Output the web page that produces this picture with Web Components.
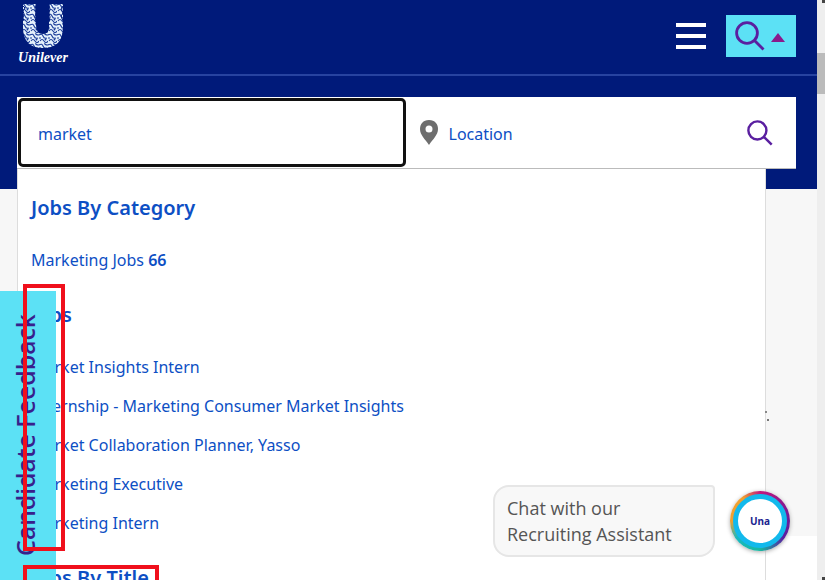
<!DOCTYPE html>
<html lang="en">
<head>
<meta charset="utf-8">
<title>Unilever careers</title>
<style>
html, body { height: 100%; }
body { margin: 0; overflow: hidden; background: #f7f7f7; color: #0d4fc4; font: 16px/24px "Noto Sans", sans-serif; }
</style>
</head>
<body>
<careers-page></careers-page>
<script>
function define(name, html) {
  const t = document.createElement('template');
  t.innerHTML = html;
  customElements.define(name, class extends HTMLElement {
    constructor() {
      super();
      this.attachShadow({ mode: 'open' }).appendChild(t.content.cloneNode(true));
    }
  });
}

define('search-glyph', `
<style>:host{display:block;width:30px;height:30px;color:#5a1fa0}svg{display:block;width:100%;height:100%}</style>
<svg viewBox="0 0 30 30" fill="none" stroke="currentColor" stroke-width="2.8" aria-hidden="true"><circle cx="12" cy="12" r="10.4"/><path d="M19.5 19.5 28.5 28.5"/></svg>`);

define('brand-logo', `
<style>
:host{display:block;width:54px}
a{display:block;color:#fff;text-decoration:none;text-align:center}
svg{display:block;margin:0 auto;width:44px;height:46px}
span{display:block;font:italic bold 14px/18px "Liberation Serif",serif}
</style>
<a href="#" aria-label="Unilever">
<svg viewBox="0 0 44 46" aria-hidden="true">
<defs><pattern id="lace" width="9" height="10" patternUnits="userSpaceOnUse">
<rect width="9" height="10" fill="#e4f0fb"/>
<path d="M0 2Q3 0 4 3T8 5M1 8Q3 5 5 8T9 8M6 0Q5 2 9 2M0 5h2" stroke="#183a98" stroke-width="1.1" fill="none"/>
<circle cx="6.5" cy="6.5" r=".9" fill="#183a98"/></pattern></defs>
<path d="M2 1H15V22Q15 31 22 31T28 22V1H42V24Q42 45 22 45T2 24Z" fill="url(#lace)"/>
<path d="M2 3l2 2-2 3 1 3-1 4 1 3M15 2l-1 4 1 4-1 4 1 5M28 2l1 4-1 4 1 4-1 5M42 3l-2 3 2 4-2 3 2 5" stroke="#001a7a" fill="none"/>
</svg><span>Unilever</span></a>`);

define('site-header', `
<style>
:host{display:flex;height:74px;box-sizing:content-box;border-bottom:2px solid #2743a0;padding:0 21px 0 16px;align-items:flex-start;justify-content:space-between}
nav{display:flex;gap:20px;padding-top:15px;align-items:center}
button{border:0;margin:0;background:none;cursor:pointer}
.menu{display:grid;gap:7px;width:30px;padding:0}
.menu i{height:4px;background:#fff}
.toggle{display:flex;align-items:center;gap:6px;height:42px;width:70px;padding:0 0 0 9px;background:#5ce1f5}
.toggle b{border:7px solid transparent;border-top:0;border-bottom:9px solid #8a1a8c;margin-top:2px}
brand-logo{padding-top:3px}
</style>
<brand-logo></brand-logo>
<nav><button class="menu" aria-label="Menu"><i></i><i></i><i></i></button>
<button class="toggle" aria-label="Toggle search"><search-glyph></search-glyph><b></b></button></nav>`);

define('job-search', `
<style>
:host{display:block;background:#fff;border-bottom:1px solid #bbb}
form{display:flex;height:71px;align-items:stretch;margin:0}
input{font:inherit;color:#0d4fc4;border:0;background:none;outline:0;min-width:0;box-sizing:border-box}
input::placeholder{color:#0d4fc4;opacity:1}
.key{flex:none;width:calc(50% - 2px);border:3px solid #111;border-radius:5px;padding:2px 17px 0;margin:1px 0 1px 1px}
.where{flex:1;display:flex;align-items:center;padding-left:13px;min-width:0}
.where svg{width:20px;height:26px;flex:none}
.where input{flex:1;height:40px;padding:2px 10px 0}
button{width:50px;border:0;background:none;padding:0;margin-right:11px;display:grid;place-items:center}
search-glyph{width:26px;height:26px}
</style>
<form onsubmit="return false"><input class="key" aria-label="Keyword" value="market">
<label class="where"><svg viewBox="0 0 20 26" aria-hidden="true"><path d="M10 0C4 0 1 4 1 9c0 6 5 10 9 16 4-6 9-10 9-16 0-5-3-9-9-9Zm0 5.500a3.500 3.500 0 1 1 0 7 3.500 3.500 0 0 1 0-7Z" fill="#6e6e6e" fill-rule="evenodd"/></svg><input aria-label="Location" placeholder="Location"></label>
<button aria-label="Search"><search-glyph></search-glyph></button></form>`);

define('suggestion-group', `
<style>
:host{display:block}
h2{margin:0 0 20px;font-size:20px;line-height:26px;font-weight:600}
ul{list-style:none;margin:0;padding:0}
::slotted(li){height:39px;line-height:39px;white-space:nowrap}
</style>
<h2><slot name="title"></slot></h2><ul><slot></slot></ul>`);

define('suggestion-list', `
<style>
:host{display:block;background:#fff;border:1px solid #ddd;border-top:0;padding:26px 13px;box-sizing:border-box}
suggestion-group{display:block;margin-bottom:22px}
a{color:inherit;text-decoration:none}
b{font-weight:600}
</style>
<suggestion-group><span slot="title">Jobs By Category</span><li><a href="#">Marketing Jobs <b>66</b></a></li></suggestion-group>
<suggestion-group><span slot="title">Jobs</span>
<li><a href="#">Market Insights Intern</a></li>
<li><a href="#">Internship - Marketing Consumer Market Insights</a></li>
<li><a href="#">Market Collaboration Planner, Yasso</a></li>
<li><a href="#">Marketing Executive</a></li>
<li><a href="#">Marketing Intern</a></li></suggestion-group>
<suggestion-group><span slot="title">Jobs By Title</span></suggestion-group>`);

define('feedback-tab', `
<style>
:host{display:block;background:#5ce1f5}
button{width:100%;height:100%;border:0;background:none;padding:24px 0 0 6px;display:flex;justify-content:flex-start;align-items:center;transform:rotate(180deg);writing-mode:vertical-rl;font:500 25px/32px "Noto Sans",sans-serif;color:#38208c}
</style>
<button>Candidate Feedback</button>`);

define('chat-prompt', `
<style>
:host{display:flex;align-items:center;gap:15px}
p{margin:0;box-sizing:border-box;width:222px;padding:8px 12px;border:2px solid #e6e6e6;border-radius:16px 4px 16px 16px;background:#f8f8f8;color:#555;font:18px/26px "Open Sans",sans-serif}
button{width:60px;height:60px;border:0;border-radius:50%;padding:3px;background:conic-gradient(#c2187c,#6a1b9a 25%,#5a1fa0 35%,#18b8a0 50%,#18b8c0 65%,#f0a030 75%,#f0a030 90%,#c2187c);box-shadow:0 1px 4px #aaa}
span{display:grid;place-items:center;box-sizing:border-box;width:54px;height:54px;border:5px solid #12b9ec;border-radius:50%;background:#fff;color:#1a2590;font:bold 10px/12px "Noto Sans",sans-serif}
</style>
<p>Chat with our<br>Recruiting Assistant</p><button aria-label="Open chat"><span>Una</span></button>`);

define('page-scrollbar', `
<style>
:host{display:flex;flex-direction:column;width:8px;background:#eee;justify-content:space-between;align-items:flex-end}
i{height:3px;width:3px;background:#444}
b{width:8px;height:41px;background:#bbb;margin-top:50px;margin-bottom:auto}
</style><i></i><b></b><i></i>`);

define('careers-page', `
<style>
:host{display:flex;height:100%;position:relative;overflow:hidden}
main{flex:1;min-width:0;background:#f7f7f7;display:flex;flex-direction:column}
.hero{display:flow-root;background:#001a7a}
.search{position:relative;margin:0 21px 20px 17px;padding-top:21px}
suggestion-list{position:absolute;top:100%;left:0;right:30px}
footer{margin-top:auto;height:44px;background:#fff}
feedback-tab{position:absolute;left:0;top:291px;bottom:0;width:56px}
chat-prompt{position:absolute;right:35px;bottom:23px}
.mark{position:absolute;border:4px solid #f0101c;box-sizing:border-box;left:23px;pointer-events:none}
.m1{top:284px;width:42px;height:267px}
.m2{top:565px;width:136px;height:30px}
.speck{position:absolute;top:411px;right:58px;width:2px;height:2px;background:#888;box-shadow:2px 8px #777}
</style>
<main><div class="hero"><site-header></site-header><div class="search"><job-search></job-search><suggestion-list></suggestion-list></div></div><footer></footer></main>
<page-scrollbar></page-scrollbar>
<div class="speck"></div>
<feedback-tab></feedback-tab><chat-prompt></chat-prompt>
<div class="mark m1"></div><div class="mark m2"></div>`);
</script>
</body>
</html>
